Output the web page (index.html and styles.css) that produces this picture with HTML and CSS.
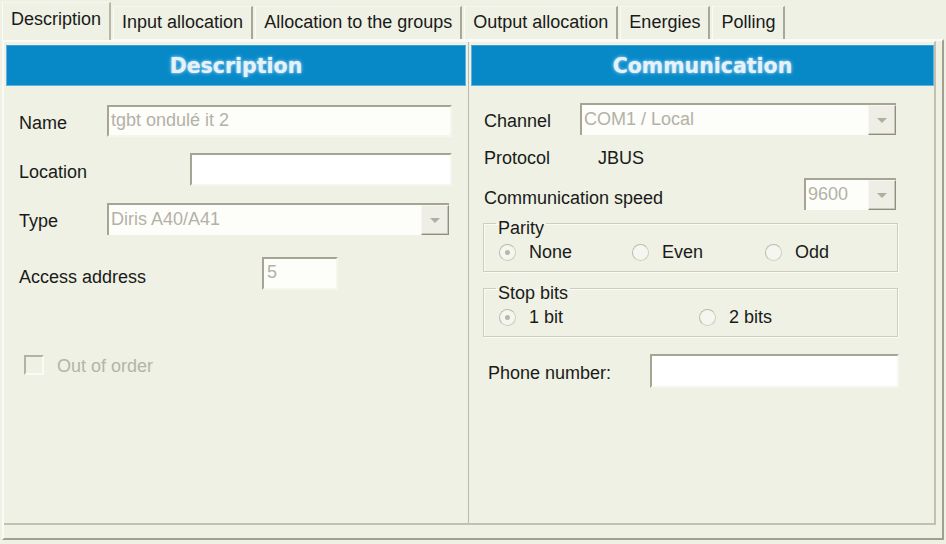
FILE: index.html
```html
<!DOCTYPE html>
<html>
<head>
<meta charset="utf-8">
<link rel="stylesheet" href="styles.css">
</head>
<body>
<div class="tabs">
  <div class="tab active">Description</div>
  <div class="tab">Input allocation</div>
  <div class="tab">Allocation to the groups</div>
  <div class="tab">Output allocation</div>
  <div class="tab">Energies</div>
  <div class="tab">Polling</div>
</div>
<div class="panel">
  <div class="cols">
    <div class="col col-left">
      <div class="header">Description</div>
      <div class="row r-name">
        <span class="label w-name">Name</span>
        <div class="field dis w-namefield">tgbt ondulé it 2</div>
      </div>
      <div class="row r-loc">
        <span class="label w-loc">Location</span>
        <div class="field w-locfield"></div>
      </div>
      <div class="row r-type">
        <span class="label w-name">Type</span>
        <div class="combo w-typefield"><span class="ctext">Diris A40/A41</span><span class="cbtn"><i class="tri"></i></span></div>
      </div>
      <div class="row r-acc">
        <span class="label w-acc lower">Access address</span>
        <div class="field dis w-accfield">5</div>
      </div>
      <div class="row r-chk">
        <span class="chk"></span>
        <span class="dis-text">Out of order</span>
      </div>
    </div>
    <div class="col col-right">
      <div class="header">Communication</div>
      <div class="row r-chan">
        <span class="label w-chan">Channel</span>
        <div class="combo w-chanfield"><span class="ctext">COM1 / Local</span><span class="cbtn"><i class="tri"></i></span></div>
      </div>
      <div class="row r-proto">
        <span class="label w-proto">Protocol</span>
        <span class="label">JBUS</span>
      </div>
      <div class="row r-speed">
        <span class="label w-speed lower">Communication speed</span>
        <div class="combo w-speedfield"><span class="ctext">9600</span><span class="cbtn"><i class="tri"></i></span></div>
      </div>
      <fieldset class="group g-parity">
        <legend>Parity</legend>
        <div class="radios">
          <div class="ritem w-par"><span class="radio on"></span><span>None</span></div>
          <div class="ritem w-par"><span class="radio"></span><span>Even</span></div>
          <div class="ritem w-par"><span class="radio"></span><span>Odd</span></div>
        </div>
      </fieldset>
      <fieldset class="group g-stop">
        <legend>Stop bits</legend>
        <div class="radios">
          <div class="ritem w-stop"><span class="radio on"></span><span>1 bit</span></div>
          <div class="ritem w-stop"><span class="radio"></span><span>2 bits</span></div>
        </div>
      </fieldset>
      <div class="row r-phone">
        <span class="label w-phone">Phone number:</span>
        <div class="field w-phonefield"></div>
      </div>
    </div>
  </div>
</div>
</body>
</html>
```
FILE: styles.css
```css
html, body {
  margin: 0;
  padding: 0;
}
body {
  width: 946px;
  height: 544px;
  overflow: hidden;
  background: #eef1e3;
  font-family: "Liberation Sans", Arial, sans-serif;
  font-size: 18px;
  color: #1a1a1a;
}

/* Tabs */
.tabs {
  display: flex;
  align-items: flex-end;
  height: 39px;
  padding-left: 2px;
  box-sizing: border-box;
}
.tab {
  height: 33px;
  line-height: 30px;
  padding: 0 8px 0 8px;
  margin-right: 2px;
  box-sizing: border-box;
  border-top: 1px solid #f6f6ef;
  border-left: 1px solid #fbfbf6;
  border-right: 2px solid #a9a795;
  white-space: nowrap;
}
.tab.active {
  height: 38px;
  line-height: 33px;
  margin-bottom: -1px;
  position: relative;
  z-index: 2;
  background: #eef1e3;
  border-right-color: #b9b7a5;
}

/* Panel */
.panel {
  margin-left: 2px;
  width: 942px;
  height: 501px;
  box-sizing: border-box;
  border: 2px solid;
  border-color: #fbfbf6 #a19f8e #a19f8e #fbfbf6;
  padding: 0 6px 13px 0;
}
.cols {
  display: grid;
  grid-template-columns: 465px 1fr;
  height: 100%;
  box-sizing: border-box;
  border-right: 2px solid #c2c0ae;
  border-bottom: 2px solid #c2c0ae;
  border-top: 1px solid #fbfbf6;
}
.col-left {
  border-right: 1px solid #bcbaa9;
}
.col {
  display: flex;
  flex-direction: column;
}
.header {
  margin: 3px 2px 0 2px;
  height: 41px;
  background: #0789c8;
  border: 1px solid #5fb2e0;
  border-top-color: #3c9fd6;
  box-sizing: border-box;
  display: flex;
  align-items: center;
  justify-content: center;
  font-family: "DejaVu Sans", Verdana, sans-serif;
  font-weight: bold;
  font-size: 20.5px;
  color: #e4f2fa;
  text-shadow: 0 0 2px #a9d7f1, 0 0 4px #7fc2e8;
}
.col-right .header {
  margin-right: 0;
}

/* Rows */
.row {
  display: flex;
  align-items: center;
  padding-left: 15px;
}
.label {
  white-space: nowrap;
  flex: none;
  padding-top: 5px;
}
.label.lower {
  padding-top: 8px;
}
.w-name { width: 88px; }
.w-loc { width: 171px; }
.w-acc { width: 243px; }
.w-chan { width: 96px; }
.w-proto { width: 114px; }
.w-speed { width: 320px; }
.w-phone { width: 162px; }

.r-name { margin-top: 19px; height: 32px; }
.r-loc { margin-top: 16px; height: 33px; }
.r-type { margin-top: 17px; height: 32px; }
.r-acc { margin-top: 22px; height: 33px; }
.r-chk { margin-top: 65px; height: 20px; padding-left: 20px; }

.r-chan { margin-top: 17px; height: 32px; }
.r-proto { margin-top: 13px; height: 20px; }
.r-proto .label { padding-top: 0; }
.r-speed { margin-top: 10px; height: 32px; }
.r-phone { margin-top: 17px; height: 34px; padding-left: 19px; }

/* Fields */
.field, .combo {
  height: 100%;
  box-sizing: border-box;
  border: 2px solid;
  border-color: #a6a493 #f6f6ef #f6f6ef #a6a493;
  background: #ffffff;
  line-height: 26px;
  padding-left: 2px;
  white-space: nowrap;
  overflow: hidden;
}
.field.dis, .combo .ctext {
  color: #b3b2a6;
}
.field.dis {
  background: #fdfdfa;
}
.w-namefield { width: 345px; }
.w-locfield { width: 262px; }
.w-typefield { width: 342px; }
.w-accfield { width: 76px; padding-left: 3px; }
.w-chanfield { width: 316px; }
.w-speedfield { width: 92px; }
.w-phonefield { width: 249px; }

.combo {
  display: flex;
  padding-left: 0;
  background: #fdfdfa;
  border-right-width: 0;
  border-bottom-width: 0;
}
.ctext {
  flex: 1;
  padding-left: 2px;
  padding-top: 1px;
  overflow: hidden;
}
.cbtn {
  width: 28px;
  flex: none;
  box-sizing: border-box;
  border: 1px solid;
  border-color: #f7f7f1 #8f8d7e #8f8d7e #f7f7f1;
  box-shadow: inset -1px -1px 0 #c9c7b7;
  background: #eeeee6;
  display: flex;
  align-items: center;
  justify-content: center;
}
.tri {
  display: block;
  width: 0;
  height: 0;
  border-left: 5px solid transparent;
  border-right: 5px solid transparent;
  border-top: 5px solid #b0ae9f;
  margin-top: 1px;
}

/* Checkbox */
.chk {
  width: 20px;
  height: 20px;
  box-sizing: border-box;
  border: 2px solid;
  border-color: #b4b2a2 #fbfbf6 #fbfbf6 #b4b2a2;
  background: #eef1e3;
  margin-right: 13px;
}
.dis-text {
  color: #b5b4a6;
  padding-top: 2px;
}

/* Group boxes */
.group {
  margin: 0 0 0 14px;
  width: 415px;
  box-sizing: border-box;
  border: 1px solid #cfcdbd;
  box-shadow: inset 1px 1px 0 #fbfbf6, 1px 1px 0 #fbfbf6;
  padding: 6px 12px 9px 12px;
  min-width: 0;
}
.g-stop { margin-top: 3px; }
.group legend {
  padding: 10px 2px 0 2px;
  line-height: 16px;
}
.radios {
  display: flex;
  height: 20px;
  align-items: center;
}
.ritem {
  display: flex;
  align-items: center;
  flex: none;
  padding-left: 3px;
  box-sizing: border-box;
}
.w-par { width: 133px; }
.w-stop { width: 200px; }
.radio {
  width: 17px;
  height: 17px;
  box-sizing: border-box;
  border-radius: 50%;
  border: 1px solid #cfcdbe;
  border-top-color: #bdbbab;
  border-left-color: #bdbbab;
  background: #f6f6f0;
  margin-right: 13px;
  display: flex;
  align-items: center;
  justify-content: center;
}
.radio.on::after {
  content: "";
  width: 5px;
  height: 5px;
  border-radius: 50%;
  background: #b9b7a8;
}
```
